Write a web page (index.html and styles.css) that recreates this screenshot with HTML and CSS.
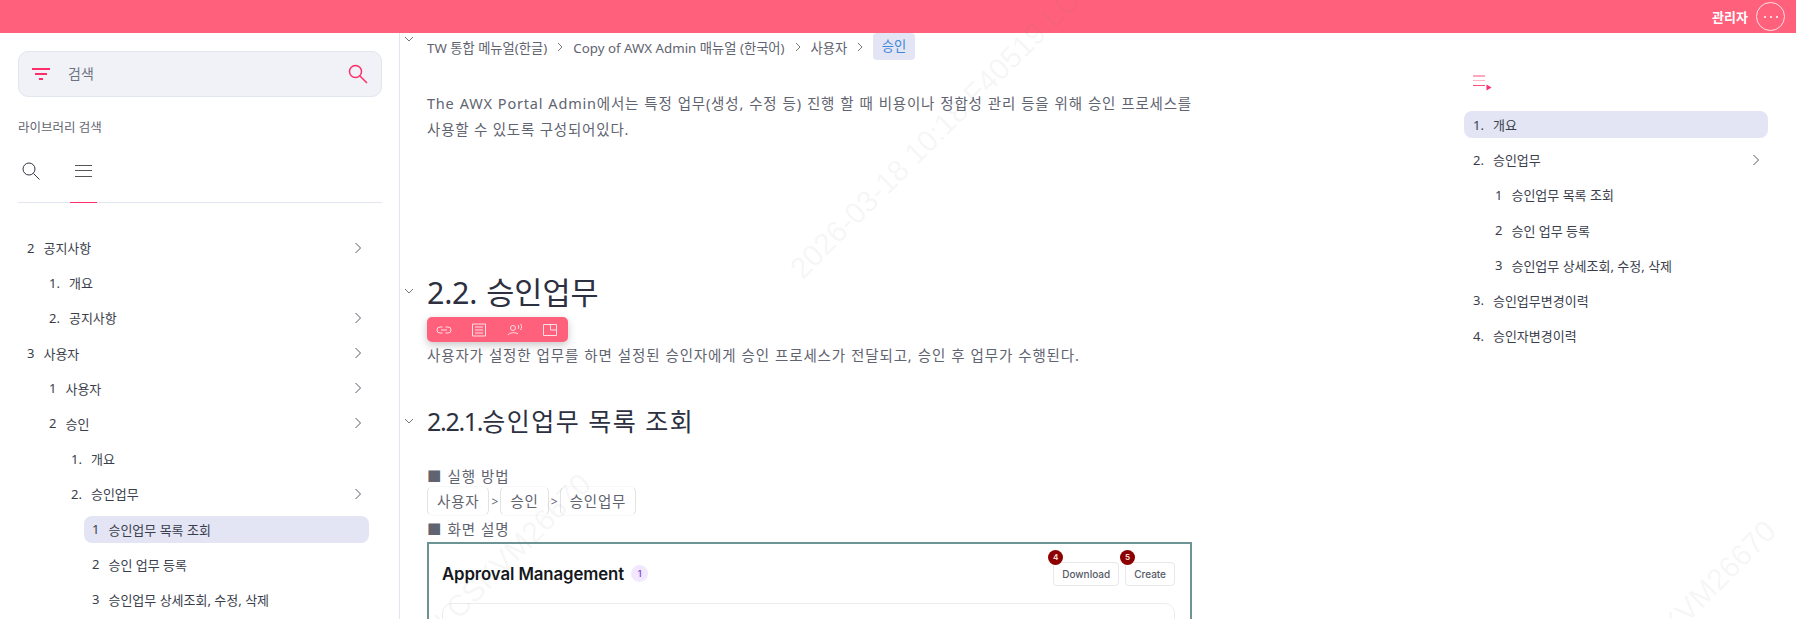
FILE: index.html
```html
<!DOCTYPE html>
<html lang="ko">
<head>
<meta charset="utf-8">
<title>승인</title>
<link rel="stylesheet" href="styles.css">
</head>
<body>
<header class="topbar">
  <span class="user">관리자</span>
  <button class="more"><svg width="16" height="4" viewBox="0 0 16 4"><circle cx="2" cy="2" r="1" /><circle cx="8" cy="2" r="1" /><circle cx="14" cy="2" r="1" /></svg></button>
</header>
<div class="layout">
  <aside class="sidebar">
    <div class="searchbox">
      <svg class="filter" width="18" height="12" viewBox="0 0 18 12"><path d="M0 1h18M3 6h12M7 11h4" /></svg>
      <span class="searchtext">검색</span>
      <svg class="mag pink" width="20" height="20" viewBox="0 0 20 20"><circle cx="7.500" cy="7.500" r="6" /><path d="M12 12l7 7" /></svg>
    </div>
    <div class="libtitle">라이브러리 검색</div>
    <div class="tabs">
      <div class="tab"><svg class="mag dark" width="18" height="18" viewBox="0 0 18 18"><circle cx="7" cy="7" r="6" /><path d="M11.500 11.500l6 6" /></svg></div>
      <div class="tab current"><svg class="burger" width="18" height="14" viewBox="0 0 18 14"><path d="M0 1.500h17M0 6.500h17M0 12.500h17" /></svg></div>
    </div>
    <ul class="tree">
      <li class="row l0"><span class="num">2</span><span class="lbl">공지사항</span><svg class="chev" viewBox="0 0 8 12"><path d="M1.500 1l5 5-5 5" /></svg></li>
      <li class="row l1"><span class="num">1.</span><span class="lbl">개요</span></li>
      <li class="row l1"><span class="num">2.</span><span class="lbl">공지사항</span><svg class="chev" viewBox="0 0 8 12"><path d="M1.500 1l5 5-5 5" /></svg></li>
      <li class="row l0"><span class="num">3</span><span class="lbl">사용자</span><svg class="chev" viewBox="0 0 8 12"><path d="M1.500 1l5 5-5 5" /></svg></li>
      <li class="row l1"><span class="num">1</span><span class="lbl">사용자</span><svg class="chev" viewBox="0 0 8 12"><path d="M1.500 1l5 5-5 5" /></svg></li>
      <li class="row l1"><span class="num">2</span><span class="lbl">승인</span><svg class="chev" viewBox="0 0 8 12"><path d="M1.500 1l5 5-5 5" /></svg></li>
      <li class="row l2"><span class="num">1.</span><span class="lbl">개요</span></li>
      <li class="row l2"><span class="num">2.</span><span class="lbl">승인업무</span><svg class="chev" viewBox="0 0 8 12"><path d="M1.500 1l5 5-5 5" /></svg></li>
      <li class="row l3 active"><span class="num">1</span><span class="lbl">승인업무 목록 조회</span></li>
      <li class="row l3"><span class="num">2</span><span class="lbl">승인 업무 등록</span></li>
      <li class="row l3"><span class="num">3</span><span class="lbl">승인업무 상세조회, 수정, 삭제</span></li>
    </ul>
  </aside>

  <main class="doc">
    <nav class="crumbs">
      <svg class="fold crumbfold" viewBox="0 0 10 6"><path d="M1 1l4 4 4-4" /></svg>
      <span>TW 통합 메뉴얼(한글)</span><svg class="sep" viewBox="0 0 8 12"><path d="M2 2l4 4-4 4" /></svg>
      <span>Copy of AWX Admin 매뉴얼 (한국어)</span><svg class="sep" viewBox="0 0 8 12"><path d="M2 2l4 4-4 4" /></svg>
      <span>사용자</span><svg class="sep" viewBox="0 0 8 12"><path d="M2 2l4 4-4 4" /></svg>
      <span class="crumb-current">승인</span>
    </nav>
    <p class="para intro">The AWX Portal Admin에서는 특정 업무(생성, 수정 등) 진행 할 때 비용이나 정합성 관리 등을 위해 승인 프로세스를 사용할 수 있도록 구성되어있다.</p>

    <h2 class="h2"><svg class="fold" viewBox="0 0 10 6"><path d="M1 1l4 4 4-4" /></svg><span class="hnum">2.2.&nbsp; </span>승인업무</h2>
    <div class="toolbar">
      <svg viewBox="0 0 16 16"><path d="M6.500 5H4a3 3 0 0 0 0 6h2.500M9.500 5H12a3 3 0 0 1 0 6H9.500M5 8h6" /></svg>
      <svg viewBox="0 0 16 16"><path d="M1.500 2h13v12h-13zM4 5h8M4 8h8M4 11h8" /></svg>
      <svg viewBox="0 0 16 16"><circle cx="6" cy="6" r="2.500" /><path d="M1 13c1-2.500 8-3 10-1M11 3c1 1 1 3 0 4M13.500 2c1.500 1.500 1.500 4 0 6" /></svg>
      <svg viewBox="0 0 16 16"><path d="M1.500 2.500h13v11h-13zM8.500 2.500v5.500h6" /></svg>
    </div>
    <p class="para lead">사용자가 설정한 업무를 하면 설정된 승인자에게 승인 프로세스가 전달되고, 승인 후 업무가 수행된다.</p>

    <h3 class="h3"><svg class="fold" viewBox="0 0 10 6"><path d="M1 1l4 4 4-4" /></svg><span class="hnum">2.2.1.</span>승인업무 목록 조회</h3>
    <p class="para mark first">■ 실행 방법</p>
    <div class="path">
      <span class="cell">사용자</span><span class="gt">&gt;</span><span class="cell">승인</span><span class="gt">&gt;</span><span class="cell">승인업무</span>
    </div>
    <p class="para mark">■ 화면 설명</p>

    <div class="shot">
      <div class="shot-head">
        <span class="shot-title">Approval Management</span>
        <span class="badge">1</span>
        <span class="actions">
          <span class="btn">Download<i class="pin">4</i></span>
          <span class="btn">Create<i class="pin">5</i></span>
        </span>
      </div>
      <div class="shot-card"></div>
    </div>
  </main>

  <aside class="toc">
    <svg class="toc-icon" width="19" height="16" viewBox="0 0 19 16"><path class="l1" d="M0 1h12" /><path class="l2" d="M0 5.500h12" /><path class="l1" d="M0 10.500h12" /><path class="arrow" d="M13.500 9.500l5 3-5 3z" /></svg>
    <ul class="toc-list">
      <li class="trow t0 active"><span class="num">1.</span><span class="lbl">개요</span></li>
      <li class="trow t0"><span class="num">2.</span><span class="lbl">승인업무</span><svg class="chev" viewBox="0 0 8 12"><path d="M1.500 1l5 5-5 5" /></svg></li>
      <li class="trow t1"><span class="num">1</span><span class="lbl">승인업무 목록 조회</span></li>
      <li class="trow t1"><span class="num">2</span><span class="lbl">승인 업무 등록</span></li>
      <li class="trow t1"><span class="num">3</span><span class="lbl">승인업무 상세조회, 수정, 삭제</span></li>
      <li class="trow t0"><span class="num">3.</span><span class="lbl">승인업무변경이력</span></li>
      <li class="trow t0"><span class="num">4.</span><span class="lbl">승인자변경이력</span></li>
    </ul>
  </aside>
</div>

<div class="watermarks">
  <span class="wm wm-a">2026-03-18 10:18 F40519 LCSKVM26670</span>
  <span class="wm wm-b">2026-03-18 10:18 F40519 LCSKVM26670</span>
  <span class="wm wm-c">2026-03-18 10:18 F40519 LCSKVM26670</span>
</div>
</body>
</html>
```

FILE: styles.css
```css
* { box-sizing: border-box; }
html, body { margin: 0; padding: 0; height: 619px; overflow: hidden; background: #fff; }
body {
  font-family: "Noto Sans", "Noto Sans CJK KR", sans-serif;
  color: #3a3e4c;
  font-size: 13px;
  display: flex;
  flex-direction: column;
  position: relative;
}
ul { list-style: none; margin: 0; padding: 0; }
p, h2, h3 { margin: 0; }

.topbar {
  height: 33px;
  flex: none;
  background: #ff607c;
  display: flex;
  align-items: center;
  justify-content: flex-end;
  gap: 8px;
  padding-right: 11px;
}
.user { color: #fff; font-size: 13px; font-weight: 700; }
.more {
  width: 29px; height: 29px;
  border: 1px solid #fde0e5;
  border-radius: 50%;
  background: none;
  padding: 0;
  display: flex; align-items: center; justify-content: center;
}
.more circle { fill: #fff; }

.layout { flex: 1; display: flex; min-height: 0; overflow: hidden; }

/* Sidebar */
.sidebar {
  width: 400px;
  flex: none;
  border-right: 1px solid #e2e6f0;
  padding: 18px 17px 0 18px;
}
.searchbox {
  height: 46px;
  background: #f0f2f7;
  border: 1px solid #e2e6f0;
  border-radius: 10px;
  display: flex;
  align-items: center;
  padding: 0 13px 0 13px;
}
.filter { flex: none; }
.filter path { stroke: #ff2d6a; stroke-width: 2; fill: none; }
.searchtext { flex: 1; margin-left: 18px; padding-bottom: 2px; font-size: 14px; color: #6d7280; }
.mag { fill: none; flex: none; }
.mag.pink { stroke: #ff2d6a; stroke-width: 1.500; }
.mag.dark { stroke: #333745; stroke-width: 1; }
.libtitle { margin-top: 22px; font-size: 12.500px; line-height: 18px; color: #5f6470; }
.tabs {
  margin-top: 12px;
  height: 54px;
  display: flex;
  gap: 25px;
  border-bottom: 1px solid #e2e6f0;
}
.tab {
  width: 27px;
  height: 54px;
  display: flex;
  justify-content: center;
  padding-top: 13px;
}
.tab:first-child { justify-content: flex-start; padding-left: 4px; }
.tab.current { border-bottom: 1px solid #ff2d6a; padding-top: 15px; }
.burger path { stroke: #555; stroke-width: 1; fill: none; }
.tree { margin-top: 31px; }
.row, .trow {
  height: 27px;
  margin-bottom: 8.200px;
  display: flex;
  align-items: center;
  position: relative;
  font-size: 13px;
  white-space: nowrap;
}
.row .num, .trow .num { margin-right: 9px; }
.row.l0 { padding-left: 9px; }
.row.l1 { padding-left: 31px; }
.row.l2 { padding-left: 53px; }
.row.l3 { padding-left: 8px; margin-left: 66px; margin-right: 13px; border-radius: 8px; }
.row.active, .trow.active { background: #e3e5f4; }
.chev {
  width: 8px; height: 12px;
  margin-left: auto;
  margin-right: 20px;
  fill: none;
  stroke: #555a66;
  stroke-width: 1;
}
.trow .chev { margin-right: 8px; }

/* Main */
.doc {
  flex: 1;
  min-width: 0;
  padding: 0 0 0 27px;
  position: relative;
}
.crumbs {
  height: 27px;
  display: flex;
  align-items: center;
  font-size: 13.300px;
  color: #5f6470;
  white-space: nowrap;
  position: relative;
}
.crumbs span { padding-top: 1px; }
.crumbs .sep { width: 8px; height: 12px; margin: 0 9px; fill: none; stroke: #777; stroke-width: 1; }
.crumbs .crumb-current {
  height: 27px;
  line-height: 24px;
  padding: 1px 8.500px 0;
  background: #e3e5f4;
  border-radius: 4px;
  color: #3f88d8;
}
.fold {
  position: absolute;
  left: -23px;
  width: 10px; height: 6px;
  fill: none;
  stroke: #777;
  stroke-width: 1;
}
.crumbfold { top: 3px; }
.para {
  width: 765px;
  font-size: 14.500px;
  line-height: 26px;
  color: #5f6470;
  letter-spacing: .85px;
  word-spacing: .5px;
  text-align: justify;
}
.intro { margin-top: 30px; letter-spacing: .8px; word-spacing: 0; }
.h2 {
  margin-top: 130px;
  font-size: 30.500px;
  line-height: 40px;
  font-weight: 400;
  color: #2c3040;
  position: relative;
}
.h2 .hnum { letter-spacing: -.3px; word-spacing: -3px; }
.h2 .fold { top: 16px; }
.toolbar {
  margin-top: 5px;
  width: 141px;
  height: 25px;
  background: #ff607c;
  border-radius: 5px;
  box-shadow: 0 3px 8px rgba(0, 0, 0, .22);
  display: flex;
  align-items: center;
  justify-content: space-between;
  padding: 0 10px 0 9px;
  position: relative;
}
.toolbar svg { width: 16px; height: 16px; fill: none; stroke: #fde0e5; stroke-width: 1; }
.lead { margin-top: 0; }
.h3 {
  margin-top: 35px;
  font-size: 25px;
  line-height: 36px;
  letter-spacing: 1.500px;
  font-weight: 400;
  color: #2c3040;
  position: relative;
}
.h3 .hnum { letter-spacing: -1.300px; }
.h3 .fold { top: 15px; }
.mark.first { margin-top: 24px; }
.mark { line-height: 26px; }
.path { display: flex; align-items: center; height: 30px; margin-top: -3px; font-size: 14.500px; color: #5f6470; letter-spacing: .8px; }
.cell {
  height: 30px;
  line-height: 28px;
  padding: 0 9px;
  border: 1px solid #e3e3e3;
  border-top-color: #f8f8f8; border-bottom-color: #f8f8f8;
  border-radius: 6px;
}
.gt { width: 11px; text-align: center; font-size: 12px; letter-spacing: 0; }

.shot {
  width: 765px;
  height: 120px;
  border: 2px solid #6d9494;
  padding: 0 15px 0 13px;
  font-family: Inter, sans-serif;
  background: #fff;
}
.shot-head { display: flex; align-items: center; height: 59px; }
.shot-title { font-size: 16.800px; font-weight: 600; color: #15171c; letter-spacing: -.1px; }
.badge {
  width: 17px; height: 17px;
  margin-left: 7px;
  border-radius: 50%;
  background: #f1e8fd;
  color: #8a4fe0;
  font-size: 9px;
  font-weight: 600;
  display: flex; align-items: center; justify-content: center;
}
.actions { margin-left: auto; display: flex; gap: 6px; }
.btn {
  height: 24px;
  padding: 0 8px;
  border: 1px solid #e8e8ea;
  border-radius: 4px;
  font-size: 10px;
  font-weight: 500;
  line-height: 22px;
  color: #555a66;
  position: relative;
}
.pin {
  position: absolute;
  left: -6px;
  top: -13px;
  width: 15px; height: 15px;
  border-radius: 50%;
  background: #8b0000;
  color: #f5d8d8;
  font-style: normal;
  font-size: 8px;
  font-weight: 700;
  line-height: 15px;
  text-align: center;
}
.shot-card {
  height: 70px;
  border: 1px solid #ececee;
  border-radius: 10px;
}

/* TOC */
.toc {
  width: 332px;
  flex: none;
  padding: 42px 28px 0 0;
}
.toc-icon { margin-left: 9px; display: block; }
.toc-icon path { fill: none; stroke-width: 1; }
.toc-icon .l1 { stroke: #ff4f7a; }
.toc-icon .l2 { stroke: #ffb3c4; }
.toc-icon .arrow { fill: #ff2d6a; stroke: none; }
.toc-list { margin-top: 20px; }
.trow { border-radius: 8px; }
.t0 { padding-left: 9px; }
.t1 { padding-left: 31px; }

/* Watermark */
.watermarks {
  position: absolute;
  inset: 0;
  overflow: hidden;
  pointer-events: none;
}
.wm {
  position: absolute;
  font-family: "Liberation Sans", sans-serif;
  font-size: 30px;
  line-height: 30px;
  color: rgba(120, 120, 120, .07);
  white-space: nowrap;
  transform: rotate(-45deg);
  transform-origin: 0 100%;
}
.wm-a { left: 806px; top: 254px; }
.wm-b { left: 199px; top: 857px; }
.wm-c { left: 1384px; top: 904px; }
```
